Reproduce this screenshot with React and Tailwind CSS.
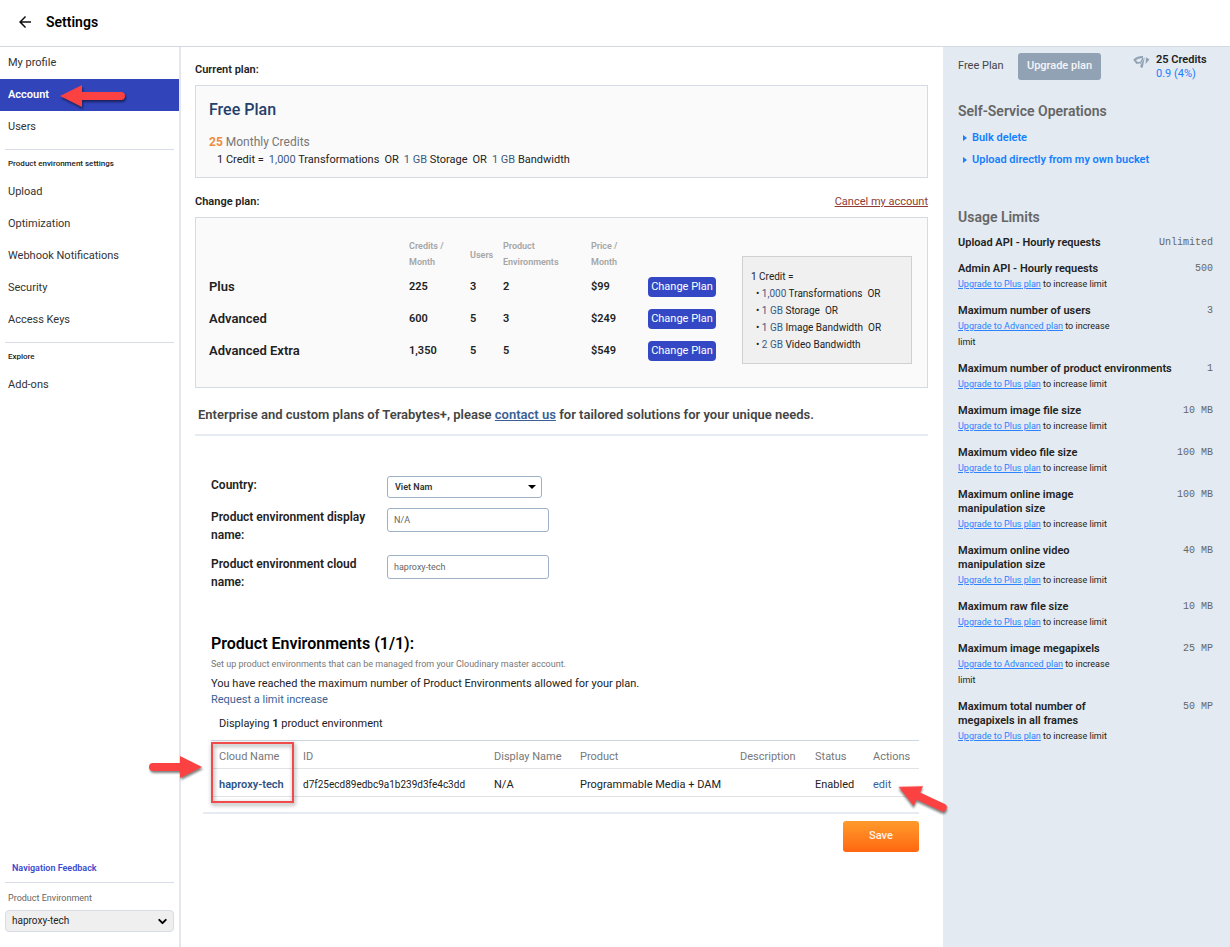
import React from 'react';
import { ChevronDown } from 'lucide-react';

const NAV_GROUPS = [
    { title: null, items: ['My profile', 'Account', 'Users'] },
    { title: 'Product environment settings', items: ['Upload', 'Optimization', 'Webhook Notifications', 'Security', 'Access Keys'] },
    { title: 'Explore', items: ['Add-ons'] },
];

const PLANS = [
    { name: 'Plus', credits: '225', users: '3', envs: '2', price: '$99' },
    { name: 'Advanced', credits: '600', users: '5', envs: '3', price: '$249' },
    { name: 'Advanced Extra', credits: '1,350', users: '5', envs: '5', price: '$549' },
];

const CREDIT_UNITS = [
    { amount: '1,000', unit: 'Transformations', or: true },
    { amount: '1 GB', unit: 'Storage', or: true },
    { amount: '1 GB', unit: 'Image Bandwidth', or: true },
    { amount: '2 GB', unit: 'Video Bandwidth', or: false },
];

const LIMITS = [
    { title: 'Upload API - Hourly requests', value: 'Unlimited', plan: null },
    { title: 'Admin API - Hourly requests', value: '500', plan: 'Plus' },
    { title: 'Maximum number of users', value: '3', plan: 'Advanced' },
    { title: 'Maximum number of product environments', value: '1', plan: 'Plus' },
    { title: 'Maximum image file size', value: '10 MB', plan: 'Plus' },
    { title: 'Maximum video file size', value: '100 MB', plan: 'Plus' },
    { title: 'Maximum online image\nmanipulation size', value: '100 MB', plan: 'Plus' },
    { title: 'Maximum online video\nmanipulation size', value: '40 MB', plan: 'Plus' },
    { title: 'Maximum raw file size', value: '10 MB', plan: 'Plus' },
    { title: 'Maximum image megapixels', value: '25 MP', plan: 'Advanced' },
    { title: 'Maximum total number of\nmegapixels in all frames', value: '50 MP', plan: 'Plus' },
];

// Red pointer, drawn pointing left
function Pointer({ className }) {
    return (
        <svg width="66" height="24" viewBox="0 0 66 24" className={`absolute z-10 overflow-visible drop-shadow-[1px_2px_1px_rgba(0,0,0,0.5)] pointer-events-none ${className}`}>
            <path d="M0 12 22 1V8H61a4 4 0 0 1 0 8H22v7Z" fill="#fb4141" />
        </svg>
    );
}

// Shorter pointer used beside the environments table
function ShortPointer({ className }) {
    return (
        <svg width="53" height="24" viewBox="0 0 53 24" className={`absolute z-10 overflow-visible pointer-events-none ${className}`}>
            <path d="M0 12 22 1V8H49a4 4 0 0 1 0 8H22v7Z" fill="#fb4141" />
        </svg>
    );
}

function Sidebar() {
    return (
        <aside className="w-[181px] shrink-0 border-r-2 border-[#e6e7ee] flex flex-col">
            <nav>
                {NAV_GROUPS.map((group, i) => (
                    <div key={i}>
                        {group.title && (
                            <div className="mx-[5px] mt-[6px] border-t border-[#d8dce6] pt-[6px] pb-1 pl-[3px] text-[8px] leading-[16px] font-medium text-[#222]">
                                {group.title}
                            </div>
                        )}
                        {group.items.map(item => (
                            <div key={item} className="relative">
                                <a
                                    href="#"
                                    className={`block px-2 text-[11px] leading-8 ${item === 'Account' ? 'bg-[#3244ba] text-white font-semibold' : 'text-[#333]'}`}
                                >
                                    {item}
                                </a>
                                {item === 'Account' && <Pointer className="left-[60px] top-[5px]" />}
                            </div>
                        ))}
                    </div>
                ))}
            </nav>

            <div className="mt-auto mx-[5px] pb-[15px]">
                <a href="#" className="block pl-[7px] text-[9px] leading-5 font-semibold text-[#3b4bd0] pb-1">Navigation Feedback</a>
                <label htmlFor="sidebar-env" className="block border-t border-[#d8dce6] pl-[3px] text-[9px] leading-5 pt-[5px] pb-[2px] text-[#666]">
                    Product Environment
                </label>
                <div className="relative">
                    <select id="sidebar-env" className="block appearance-none w-full h-[22px] rounded border border-[#d8dce6] bg-[#efefef] pl-[6px] text-[10px] leading-5 text-[#222]">
                        <option>haproxy-tech</option>
                    </select>
                    <ChevronDown size={13} strokeWidth={3.6} className="absolute right-[5px] top-[5px] text-black pointer-events-none" />
                </div>
            </div>
        </aside>
    );
}

function CurrentPlan() {
    return (
        <section>
            <h2 className="text-[11px] leading-4 font-semibold text-[#222]">Current plan:</h2>
            <div className="mt-[7px] border border-[#d3dbe4] bg-[#fafafa] px-[13px] pt-3 pb-2">
                <h3 className="text-base leading-6 font-medium text-[#24406b]">Free Plan</h3>
                <p className="mt-[11px] text-xs leading-[18px] text-[#777]">
                    <span className="font-bold text-[#f08b3a]">25</span> Monthly Credits
                </p>
                <p className="pl-2 text-[11px] leading-[18px] text-[#222] flex gap-[5px]">
                    <span>1 Credit =</span>
                    <span><span className="text-[#3a5a85]">1,000</span> Transformations</span>
                    <span>OR</span>
                    <span><span className="text-[#3a5a85]">1 GB</span> Storage</span>
                    <span>OR</span>
                    <span><span className="text-[#3a5a85]">1 GB</span> Bandwidth</span>
                </p>
            </div>
        </section>
    );
}

function ChangePlan() {
    return (
        <section className="mt-4">
            <div className="flex justify-between text-[11px] leading-4">
                <h2 className="font-semibold text-[#222]">Change plan:</h2>
                <a href="#" className="underline text-[#8e3b34]">Cancel my account</a>
            </div>
            <div className="mt-[7px] border border-[#d3dbe4] bg-[#fafafa] pl-[13px] pr-[15px] pt-5 pb-5 flex justify-between items-start">
                <table className="table-fixed w-[508px] text-left text-[#222]">
                    <thead>
                        <tr className="h-[33px] align-top text-[9px] leading-4 text-[#a5a5a5]">
                            <th className="w-[200px]"></th>
                            <th className="w-[61px] font-semibold">Credits /<br />Month</th>
                            <th className="w-[33px] font-semibold align-middle">Users</th>
                            <th className="w-[88px] font-semibold">Product<br />Environments</th>
                            <th className="w-[57px] font-semibold">Price /<br />Month</th>
                            <th></th>
                        </tr>
                    </thead>
                    <tbody>
                        {PLANS.map(plan => (
                            <tr key={plan.name} className="h-8 text-[11px] leading-4 font-semibold">
                                <th className="text-[13px] font-semibold">{plan.name}</th>
                                <td>{plan.credits}</td>
                                <td>{plan.users}</td>
                                <td>{plan.envs}</td>
                                <td>{plan.price}</td>
                                <td>
                                    <button className="block w-[68px] h-5 rounded bg-[#3448c5] text-[11px] leading-5 font-normal text-white whitespace-nowrap">Change Plan</button>
                                </td>
                            </tr>
                        ))}
                    </tbody>
                </table>
                <div className="mt-[18px] w-[170px] border border-[#d0d0d0] bg-[#f0f0f0] pl-2 pt-[11px] pb-[10px] text-[10px] leading-[17px] text-[#222]">
                    <p>1 Credit =</p>
                    <ul className="pl-[5px]">
                        {CREDIT_UNITS.map(c => (
                            <li key={c.unit}>
                                • <span className="text-[#3a5a85]">{c.amount}</span> {c.unit}
                                {c.or && <span className="ml-[5px]">OR</span>}
                            </li>
                        ))}
                    </ul>
                </div>
            </div>
        </section>
    );
}

function AccountForm() {
    return (
        <div className="mt-10 pl-4 grid grid-cols-[176px_1fr] text-xs font-semibold text-[#222]">
            <label htmlFor="country" className="leading-[18px] pb-[14px]">Country:</label>
            <div className="relative w-[155px]">
                <select id="country" className="block appearance-none w-full h-[22px] rounded-[3px] border border-[#9db0c5] bg-white pl-[7px] text-[9px] leading-5 font-semibold text-[#333]">
                    <option>Viet Nam</option>
                </select>
                <svg width="8" height="4" viewBox="0 0 8 4" className="absolute right-[6px] top-[9px] pointer-events-none">
                    <path d="M0 0h8L4 4Z" fill="#000" />
                </svg>
            </div>
            <label htmlFor="display-name" className="leading-[18px] pb-[11px] pr-4">Product environment display name:</label>
            <div>
                <input id="display-name" defaultValue="N/A" className="block w-[162px] h-6 rounded-[3px] border border-[#9db0c5] px-[6px] text-[9px] font-normal text-[#666]" />
            </div>
            <label htmlFor="cloud-name" className="leading-[18px] pr-4">Product environment cloud name:</label>
            <div>
                <input id="cloud-name" defaultValue="haproxy-tech" className="block w-[162px] h-6 rounded-[3px] border border-[#9db0c5] px-[6px] text-[9px] font-normal text-[#666]" />
            </div>
        </div>
    );
}

function Environments() {
    return (
        <section className="mt-[41px] pl-4 pr-[9px] text-[11px] text-[#222]">
            <h2 className="text-base leading-6 font-semibold text-black">Product Environments (1/1):</h2>
            <p className="text-[9px] leading-4 text-[#777]">Set up product environments that can be managed from your Cloudinary master account.</p>
            <p className="mt-1 leading-4">You have reached the maximum number of Product Environments allowed for your plan.</p>
            <a href="#" className="block leading-4 text-[#3a5f95]">Request a limit increase</a>
            <p className="mt-2 pl-2 leading-4">Displaying <b>1</b> product environment</p>

            <div className="relative mt-2">
                <table className="table-fixed w-full text-left border-t border-[#ccd6e0] leading-4">
                    <thead>
                        <tr className="h-7 border-b border-[#e0e2e5] text-[#777]">
                            <th className="w-[84px] pl-2 pt-1 font-normal">Cloud Name</th>
                            <th className="w-[191px] pl-2 pt-1 font-normal">ID</th>
                            <th className="w-[86px] pl-2 pt-1 font-normal">Display Name</th>
                            <th className="pl-2 pt-1 font-normal">Product</th>
                            <th className="w-[75px] pl-2 pt-1 font-normal">Description</th>
                            <th className="w-[58px] pl-2 pt-1 font-normal">Status</th>
                            <th className="w-[54px] pl-2 pt-1 font-normal">Actions</th>
                        </tr>
                    </thead>
                    <tbody>
                        <tr className="h-7 border-b border-[#e0e2e5]">
                            <td className="pl-2 pt-1 font-semibold"><a href="#" className="text-[#2d5488]">haproxy-tech</a></td>
                            <td className="pl-2 pt-1 text-[10px]">d7f25ecd89edbc9a1b239d3fe4c3dd</td>
                            <td className="pl-2 pt-1">N/A</td>
                            <td className="pl-2 pt-1">Programmable Media + DAM</td>
                            <td className="pl-2 pt-1"></td>
                            <td className="pl-2 pt-1">Enabled</td>
                            <td className="pl-2 pt-1"><a href="#" className="text-[#3a5f95]">edit</a></td>
                        </tr>
                    </tbody>
                </table>
                <div className="absolute left-0 top-[2px] w-[83px] h-[61px] border-2 border-[#f04a4a] drop-shadow-[1px_2px_2px_rgba(0,0,0,0.45)] pointer-events-none" />
                <ShortPointer className="-left-[62px] top-[15px] rotate-180 drop-shadow-[-1px_-2px_1px_rgba(0,0,0,0.5)]" />
                <ShortPointer className="-right-[30px] top-[46px] rotate-[25deg] drop-shadow-[1px_2px_1px_rgba(0,0,0,0.5)]" />
            </div>

            <div className="mt-[15px] -ml-2 border-t-2 border-[#e6ebf1] pt-[7px] flex justify-end">
                <button className="w-[76px] h-[31px] rounded-[3px] bg-linear-to-b from-[#ff9a2b] to-[#ff660f] text-[11px] font-medium text-white/90">Save</button>
            </div>
        </section>
    );
}

function UsagePanel() {
    return (
        <aside className="w-[287px] shrink-0 bg-[#e3eaf1] pl-[15px] pr-[17px] text-[11px] text-[#222]">
            <div className="flex items-start pt-[6px]">
                <span className="w-[60px] pt-1 leading-[18px] text-[#444]">Free Plan</span>
                <button className="w-[83px] h-[27px] rounded-[3px] bg-[#92a2b5] text-[11px] font-medium text-white/90">Upgrade plan</button>
                <svg width="17" height="14" viewBox="0 0 17 14" className="ml-8 mt-[2px] shrink-0" fill="none" stroke="#92a2b5">
                    <path d="M4.500 8.500 1.500 4.800Q5 1.800 10 2" strokeWidth="2" strokeLinejoin="round" />
                    <path d="M4.500 8.500Q6.500 7 7.500 8L10 3" strokeWidth="1.500" strokeLinejoin="round" />
                    <path d="M11.800 2 9.800 12.500Q7.500 13.500 7.200 11Z" fill="#92a2b5" stroke="none" />
                    <path d="M13 2.200 16.500 4.500 12.600 9Z" fill="#92a2b5" stroke="none" />
                </svg>
                <div className="ml-[6px] leading-[14px]">
                    <div className="font-semibold">25 Credits</div>
                    <a href="#" className="text-[#1f7cff]">0.9 (4%)</a>
                </div>
            </div>

            <h2 className="mt-5 text-sm leading-5 font-semibold text-[#666]">Self-Service Operations</h2>
            <ul className="mt-[6px] leading-[22px] font-semibold text-[#1480ff]">
                {['Bulk delete', 'Upload directly from my own bucket'].map(op => (
                    <li key={op} className="flex items-center pl-[5px]">
                        <svg width="4" height="6" viewBox="0 0 4 6" className="mr-[5px]"><path d="M0 0 4 3 0 6Z" fill="#1480ff" /></svg>
                        <a href="#">{op}</a>
                    </li>
                ))}
            </ul>

            <h2 className="mt-9 text-sm leading-5 font-semibold text-[#666]">Usage Limits</h2>
            <ul className="mt-[9px] flex flex-col gap-3">
                {LIMITS.map(limit => (
                    <li key={limit.title}>
                        <div className="flex justify-between leading-[14px]">
                            <span className="font-semibold whitespace-pre-line">{limit.title}</span>
                            <span className="shrink-0 font-['Liberation_Mono',monospace] text-[10px] text-[#666]">{limit.value}</span>
                        </div>
                        {limit.plan && (
                            <p className="text-[9px] leading-4">
                                <a href="#" className="underline text-[#2b83ff]">Upgrade to {limit.plan} plan</a>
                                <span> to increase</span>
                                {limit.plan === 'Advanced' ? <span className="block">limit</span> : <span> limit</span>}
                            </p>
                        )}
                    </li>
                ))}
            </ul>
        </aside>
    );
}

export default function App() {
    return (
        <div className="min-h-screen flex flex-col bg-white font-['Roboto',sans-serif]">
            <header className="h-[47px] shrink-0 border-b border-[#d3d9e2] flex items-center pl-4 pb-[2px] gap-3">
                <button aria-label="Back">
                    <svg width="18" height="18" viewBox="0 0 24 24" fill="#111"><path d="M20 11H7.830l5.590-5.590L12 4l-8 8 8 8 1.410-1.410L7.830 13H20v-2z" /></svg>
                </button>
                <h1 className="text-sm font-semibold text-black">Settings</h1>
            </header>

            <div className="flex flex-1">
                <Sidebar />
                <main className="flex-1 min-w-0 pl-[14px] pr-[15px] pt-[15px]">
                    <CurrentPlan />
                    <ChangePlan />
                    <p className="border-b-2 border-[#e6ebf1] pl-[3px] pt-[17px] pb-[9px] text-[13px] leading-5 font-semibold text-[#444]">
                        Enterprise and custom plans of Terabytes+, please{' '}
                        <a href="#" className="underline text-[#3a5f95]">contact us</a> for tailored solutions for your unique needs.
                    </p>
                    <AccountForm />
                    <Environments />
                </main>
                <UsagePanel />
            </div>
        </div>
    );
}
